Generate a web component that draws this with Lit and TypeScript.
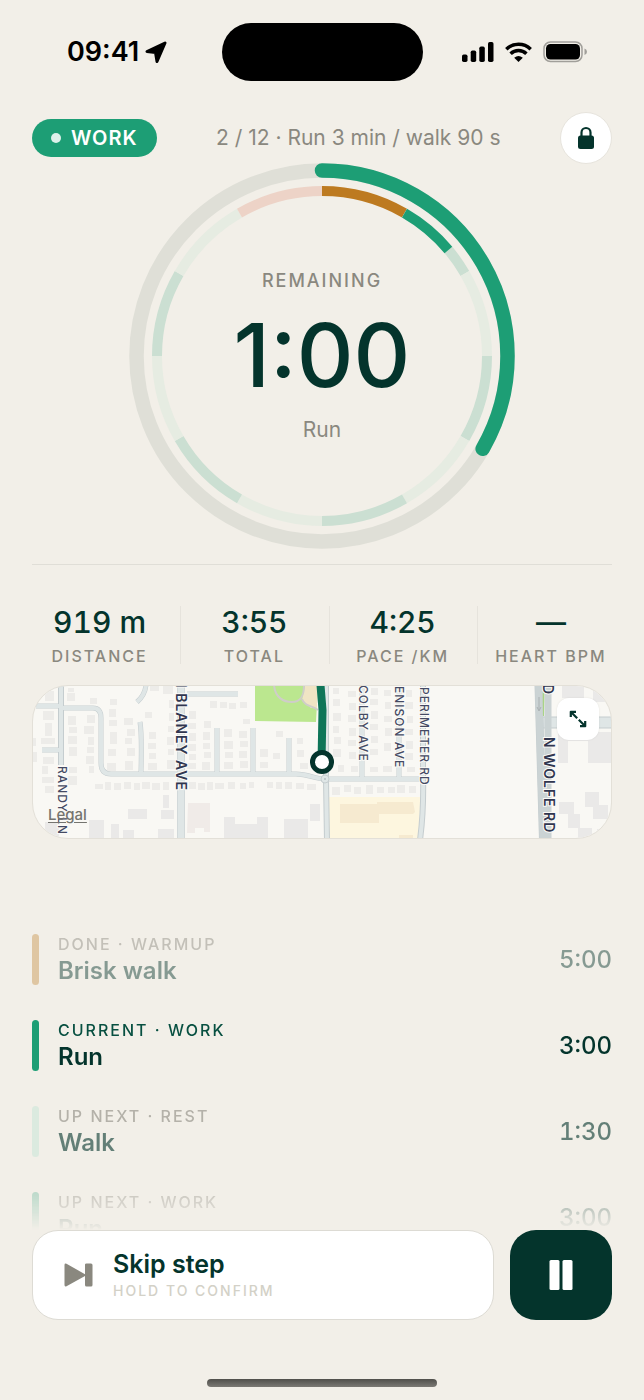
import { LitElement, html, svg, css } from 'lit';

type Kind = 'warmup' | 'work' | 'rest' | 'cooldown';

interface Stat {
  value: string;
  label: string;
}

interface Step {
  state: 'done' | 'current' | 'next';
  kind: Kind;
  name: string;
  time: string;
}

type Box = [number, number, number, number];

const SEGMENTS: Kind[] = [
  'warmup', 'work', 'rest', 'work', 'rest', 'work',
  'rest', 'work', 'rest', 'work', 'rest', 'cooldown'
];

const STATS: Stat[] = [
  { value: '919 m', label: 'Distance' },
  { value: '3:55', label: 'Total' },
  { value: '4:25', label: 'Pace /km' },
  { value: '—', label: 'Heart bpm' }
];

const STEPS: Step[] = [
  { state: 'done', kind: 'warmup', name: 'Brisk walk', time: '5:00' },
  { state: 'current', kind: 'work', name: 'Run', time: '3:00' },
  { state: 'next', kind: 'rest', name: 'Walk', time: '1:30' },
  { state: 'next', kind: 'work', name: 'Run', time: '3:00' }
];

const STATE_LABELS = { done: 'Done', current: 'Current', next: 'Up next' };

// Angles are in degrees, clockwise from twelve o'clock
function arc(r: number, from: number, to: number) {
  const point = (deg: number) => {
    const a = ((deg - 90) * Math.PI) / 180;
    return `${(193 + r * Math.cos(a)).toFixed(2)} ${(193 + r * Math.sin(a)).toFixed(2)}`;
  };
  return `M${point(from)}A${r} ${r} 0 ${to - from > 180 ? 1 : 0} 1 ${point(to)}`;
}

export class ProgressRing extends LitElement {
  static properties = {
    progress: { type: Number },
    current: { type: Number }
  };

  declare progress: number;
  declare current: number;

  static styles = css`
    :host {
      display: grid;
      width: 60%;
      min-width: 280px;
      max-width: 386px;
    }

    .dial,
    .content {
      grid-area: 1 / 1;
    }

    .dial {
      display: block;
      width: 100%;
      fill: none;
    }

    .track {
      stroke: #dfdfd7;
      stroke-width: 14.5;
    }

    .bar {
      stroke: #1d9e75;
      stroke-width: 14.5;
      stroke-linecap: round;
    }

    .segment {
      stroke-width: 10;
    }

    .warmup { stroke: #bd7a20; }
    .work { stroke: #cbdfd2; }
    .rest { stroke: #e6ece2; }
    .cooldown { stroke: #edd3c7; }
    .elapsed { stroke: #1d9e75; }

    .content {
      display: flex;
      flex-direction: column;
      align-items: center;
      justify-content: center;
    }
  `;

  render() {
    const size = 360 / SEGMENTS.length;
    const start = (this.current - 1) * size;
    return html`
      <svg class="dial" viewBox="0 0 386 386" aria-hidden="true">
        <circle class="track" cx="193" cy="193" r="185.5"></circle>
        <path class="bar" d=${arc(185.5, 0, this.progress * 360)}></path>
        ${SEGMENTS.map((kind, i) => svg`
          <path class="segment ${kind}" d=${arc(165, i * size, (i + 1) * size)}></path>
        `)}
        <path class="segment elapsed" d=${arc(165, start, start + size * 2 / 3)}></path>
      </svg>
      <div class="content"><slot></slot></div>
    `;
  }
}

customElements.define('progress-ring', ProgressRing);

const HOUSES: Box[] = [
  [45, 691, 9, 10], [67, 693, 8, 8], [43, 711, 11, 9], [45, 723, 7, 13], [41, 738, 14, 6],
  [68, 716, 8, 9], [69, 727, 8, 6], [68, 736, 9, 8], [69, 747, 8, 9], [43, 757, 11, 7],
  [42, 766, 6, 8], [42, 777, 12, 6], [69, 767, 8, 6], [68, 776, 9, 9], [45, 786, 9, 7],
  [87, 715, 8, 8], [84, 726, 10, 8], [88, 737, 6, 8], [87, 747, 7, 6], [86, 756, 8, 8],
  [89, 766, 5, 7], [68, 688, 6, 4], [90, 698, 7, 6],
  [110, 699, 7, 6], [109, 709, 7, 8], [109, 720, 8, 6], [110, 732, 7, 12], [108, 749, 8, 7],
  [107, 763, 9, 8], [124, 718, 9, 7], [127, 729, 8, 7], [125, 738, 7, 6], [127, 748, 8, 8],
  [125, 761, 8, 9], [145, 712, 7, 6], [149, 732, 7, 7], [148, 743, 8, 6], [149, 753, 7, 6],
  [148, 763, 9, 7], [150, 686, 9, 5], [163, 686, 10, 8], [169, 700, 5, 8], [169, 713, 5, 8],
  [168, 726, 6, 6], [167, 737, 7, 8], [168, 749, 6, 6], [167, 760, 8, 9],
  [189, 711, 7, 8], [188, 723, 8, 6], [189, 733, 7, 8], [188, 744, 8, 7], [189, 754, 7, 6],
  [187, 763, 9, 6], [204, 721, 7, 7], [203, 732, 7, 8], [203, 743, 7, 6], [204, 752, 7, 6],
  [202, 762, 8, 8], [210, 701, 7, 7], [220, 702, 7, 6], [229, 703, 7, 6], [240, 702, 7, 6],
  [224, 729, 8, 8], [224, 741, 9, 8], [225, 752, 8, 6], [224, 762, 9, 7],
  [239, 731, 8, 7], [240, 741, 8, 6], [239, 751, 8, 7], [240, 761, 8, 7], [243, 719, 7, 5],
  [276, 731, 7, 6], [260, 749, 8, 8], [260, 762, 8, 6], [273, 753, 7, 6], [297, 738, 6, 6],
  [297, 750, 7, 7], [300, 763, 8, 6],
  [333, 688, 6, 6], [333, 699, 7, 7], [333, 713, 8, 8], [333, 726, 6, 7], [334, 737, 7, 7],
  [333, 749, 8, 8], [338, 765, 6, 7], [348, 691, 8, 6], [349, 703, 7, 7], [348, 715, 8, 7],
  [349, 728, 7, 8], [348, 740, 8, 6], [349, 752, 7, 7], [351, 766, 7, 6],
  [371, 688, 7, 7], [370, 699, 8, 6], [371, 711, 7, 8], [370, 724, 8, 6], [371, 736, 7, 7],
  [370, 749, 8, 6], [370, 767, 8, 5], [384, 690, 7, 6], [385, 702, 6, 7], [384, 716, 8, 6],
  [385, 728, 7, 8], [384, 743, 7, 8], [383, 766, 9, 6], [406, 690, 6, 7], [405, 702, 8, 7],
  [407, 716, 6, 7], [405, 729, 8, 6], [406, 741, 7, 8], [405, 753, 8, 7], [407, 767, 8, 5],
  [95, 784, 8, 5], [105, 782, 6, 8], [114, 783, 7, 7], [124, 782, 7, 7], [134, 783, 6, 7],
  [142, 782, 8, 7], [152, 783, 8, 7], [163, 782, 6, 8], [189, 782, 7, 7], [198, 783, 7, 7],
  [207, 782, 6, 8], [215, 783, 9, 6], [228, 782, 7, 7], [240, 783, 6, 6], [249, 782, 5, 6],
  [267, 782, 6, 6], [276, 782, 6, 7], [285, 782, 7, 7], [296, 783, 8, 6], [307, 784, 9, 6],
  [332, 787, 8, 8], [344, 785, 7, 7], [354, 787, 7, 7], [366, 785, 7, 9], [377, 787, 7, 6],
  [388, 787, 7, 6], [397, 785, 8, 8], [409, 786, 7, 7],
  [33, 738, 3, 8], [33, 752, 4, 10]
];

const BLOCKS: Box[] = [
  [163, 795, 6, 13], [128, 809, 19, 10], [161, 810, 13, 9], [45, 822, 14, 17],
  [89, 820, 15, 19], [111, 824, 8, 15], [123, 830, 11, 9], [158, 829, 16, 10],
  [310, 804, 10, 17], [284, 819, 24, 20], [224, 817, 11, 22], [257, 817, 11, 22],
  [235, 824, 22, 15], [562, 685, 22, 13], [593, 687, 17, 15],
  [558, 733, 10, 30], [568, 732, 20, 9], [588, 732, 24, 11], [588, 743, 24, 20],
  [585, 792, 14, 15], [559, 802, 15, 12], [568, 814, 12, 14], [578, 828, 14, 11],
  [593, 805, 15, 14], [597, 829, 10, 8]
];

export class RouteMap extends LitElement {
  static styles = css`
    :host {
      display: block;
      position: relative;
      overflow: hidden;
      box-sizing: border-box;
      height: 154px;
      border: 1px solid #e3e0d8;
      border-radius: 36px;
      background: #f9f8f4;
    }

    .map {
      display: block;
      width: 100%;
      height: 100%;
    }

    .house { fill: #edece9; }
    .block { fill: #eae9e8; }
    .casing {
      fill: none;
      stroke: #c5cdcf;
    }
    .road {
      fill: none;
      stroke: #dfe6e6;
    }
    .main { stroke: #cbd3d4; }
    .w4 { stroke-width: 4; }
    .w5 { stroke-width: 5; }
    .w6 { stroke-width: 6; }
    .w7 { stroke-width: 7; }
    .w8 { stroke-width: 8; }
    .w10 { stroke-width: 10; }
    .w12 { stroke-width: 12; }

    .street {
      font: 500 12px/1 Inter, "Liberation Sans", sans-serif;
      letter-spacing: 1px;
      fill: #444a63;
      stroke: #fbfaf7;
      stroke-width: 2;
      paint-order: stroke;
    }

    .avenue {
      font-weight: 600;
      font-size: 14px;
      fill: #30364f;
    }

    .route {
      fill: none;
      stroke: #0e7558;
      stroke-width: 8;
    }

    .legal {
      position: absolute;
      left: 15px;
      bottom: 14px;
      color: #74746f;
      font-size: 15px;
      font-weight: 500;
      line-height: 18px;
      text-underline-offset: 2px;
    }

    .expand {
      position: absolute;
      top: 12px;
      right: 12px;
      display: grid;
      place-items: center;
      width: 42px;
      height: 42px;
      padding: 0;
      border: 0;
      border-radius: 12px;
      background: #fff;
      box-shadow: 0 0 2px #00000018;
    }
  `;

  private boxes(list: Box[], name: string) {
    return svg`<path class=${name} d=${list.map(([x, y, w, h]) => `M${x} ${y}h${w}v${h}h-${w}z`).join('')}></path>`;
  }

  // Each road is a wide casing with a narrower fill on top
  private roads() {
    const minor = 'M36 706H61M61 708H93Q101 708 101 718V763Q101 774 111 774H296C309 774 314 779 325 779H423'
      + 'M42 750H60M137 702Q145 695 146 685M140 722Q142 734 141 772M187 694H238'
      + 'M217 728V772M253 728V772M289 738V772M362 685V778M399 685V778';
    const medium = 'M61 685V765M326 685V779L327 840M423 685V772Q424 810 420 840';
    const big = 'M181 685V840';
    return svg`
      <path class="casing w5" d=${minor}></path>
      <path class="casing w6" d=${medium}></path>
      <path class="casing w8" d=${big}></path>
      <path class="casing w12" d="M540 722.5H612"></path>
      <path class="road w4" d=${minor}></path>
      <path class="road w4" d=${medium}></path>
      <path class="road w7" d=${big}></path>
      <path class="road w10" d="M540 722.5H612"></path>
      <path class="casing w8" d="M538.5 685L543 840"></path>
      <path class="road main w7" d="M538.5 685L543 840M548 685V840"></path>
      <path d="M542.5 685h2l-.5 31h-1z" fill="#a9d486"></path>
      <path d="M539 697v13m-2-3 2 4 2-4" stroke="#aab1b2" fill="none"></path>
      <circle cx="325" cy="779" r="4" fill="#dfe6e6" stroke="#c5cdcf"></circle>
      <circle cx="325" cy="779" r="1" fill="#b6bfc2"></circle>
    `;
  }

  render() {
    return html`
      <svg class="map" viewBox="33 686 578 152" preserveAspectRatio="xMidYMid slice" role="img" aria-label="Route map">
        ${this.boxes(HOUSES, 'house')}
        ${this.boxes(BLOCKS, 'block')}
        <path d="M188 803h22v29h-6v-4h-9v5h-8z" fill="#f0ebe8"></path>
        <path d="M255 685h63l-2 37-61-1z" fill="#bbe78f"></path>
        <path d="M305 685h12v23h-6l-9-8z" fill="#f0e4c4"></path>
        <path d="M274 685c1 13 10 17 18 17 9 0 12-6 12-17M302 699c3 8 10 6 16 11" fill="none" stroke="#cfcdc9" stroke-width="2"></path>
        <path d="M329 797h92l-3 42h-89z" fill="#fdf6df"></path>
        <path d="M340 804h37v-2h36l2 10-2 2h-34v9h-39zM399 835h14v4h-14z" fill="#f6ead0"></path>
        ${this.roads()}
        <text class="street" transform="translate(58 766) rotate(90)">RANDY LN</text>
        <text class="street avenue" transform="translate(176 677) rotate(90)">N BLANEY AVE</text>
        <text class="street" transform="translate(359 685) rotate(90)">COLBY AVE</text>
        <text class="street" transform="translate(395 686) rotate(90)">ENISON AVE</text>
        <text class="street" transform="translate(420 687) rotate(90)">PERIMETER RD</text>
        <text class="street avenue" transform="translate(544 737) rotate(90)">N WOLFE RD</text>
        <text class="street avenue" transform="translate(543 684) rotate(90)">D</text>
        <path class="route" d="M320.5 685L322.5 710L321.5 762"></path>
        <circle cx="322" cy="762" r="9.5" fill="#fff" stroke="#04342c" stroke-width="5"></circle>
      </svg>
      <a class="legal" href="#legal">Legal</a>
      <button class="expand" aria-label="Expand map">
        <svg width="18" height="18" viewBox="0 0 18 18" fill="none" stroke="#04342c" stroke-width="2.2" stroke-linejoin="round">
          <path d="M1.8 7V1.8H7M2 2L8.200 8.200M16.200 11V16.200H11M16 16L9.800 9.800"></path>
        </svg>
      </button>
    `;
  }
}

customElements.define('route-map', RouteMap);

export class AppRoot extends LitElement {
  static styles = css`
    :host {
      display: flex;
      flex-direction: column;
      box-sizing: border-box;
      min-height: 100vh;
      padding: 23px 0 13px;
      background: #f2efe8;
      color: #04342c;
      font-family: Inter, "Liberation Sans", sans-serif;
    }

    button {
      font: inherit;
      color: inherit;
      cursor: pointer;
    }

    .status {
      display: grid;
      grid-template-columns: 1fr auto 1fr;
      align-items: center;
      color: #000;
    }

    .clock {
      display: flex;
      align-items: center;
      gap: 6px;
      padding-left: 67px;
      font-size: 27px;
      line-height: 34px;
      font-weight: 600;
    }

    .island {
      width: 201px;
      height: 58px;
      border-radius: 29px;
      background: #000;
    }

    .signals {
      display: flex;
      align-items: center;
      justify-content: flex-end;
      gap: 11px;
      padding-right: 56px;
    }

    .header,
    .stats,
    .steps,
    .controls,
    .map-wrap {
      margin-left: 32px;
      margin-right: 32px;
    }

    .header {
      display: flex;
      align-items: center;
      justify-content: space-between;
      height: 50px;
      margin-top: 32px;
    }

    .badge {
      display: flex;
      align-items: center;
      gap: 10px;
      box-sizing: border-box;
      height: 38px;
      padding: 0 19px;
      border-radius: 19px;
      background: #1d9e75;
      color: #fff;
      font-size: 20px;
      font-weight: 600;
      letter-spacing: 1px;
    }

    .dot {
      width: 10px;
      height: 10px;
      border-radius: 50%;
      background: #ddf1ea;
    }

    .title {
      color: #8a887f;
      font-size: 21px;
      line-height: 26px;
    }

    .lock {
      display: grid;
      flex: none;
      place-items: center;
      width: 52px;
      height: 52px;
      padding: 0;
      border: 1px solid #e7e4dd;
      border-radius: 50%;
      background: #fff;
    }

    .ring {
      align-self: center;
    }

    .remaining {
      color: #8a887f;
      font-size: 18px;
      line-height: 24px;
      font-weight: 500;
      letter-spacing: 2px;
      text-transform: uppercase;
    }

    .countdown {
      margin: 18px 0;
      font-size: 88px;
      line-height: 88px;
      font-weight: 500;
    }

    .activity {
      color: #8a887f;
      font-size: 21px;
      line-height: 26px;
    }

    .stats {
      display: grid;
      grid-template-columns: repeat(4, 1fr);
      column-gap: 13px;
      margin-top: 15px;
      padding: 41px 0 21px;
      border-top: 1px solid #e0ded7;
    }

    .stat {
      text-align: center;
      white-space: nowrap;
    }

    .stat + .stat {
      padding-left: 12px;
      border-left: 1px solid #e6e3dc;
    }

    .value {
      font-size: 30px;
      line-height: 32px;
      font-weight: 500;
      font-variant-numeric: tabular-nums;
    }

    .label {
      margin-top: 10px;
      color: #8a887f;
      font-size: 16px;
      line-height: 16px;
      font-weight: 500;
      letter-spacing: 2px;
      text-transform: uppercase;
    }

    .steps {
      flex: 1 1 0;
      display: flex;
      flex-direction: column;
      gap: 35px;
      min-height: 200px;
      margin-top: 40px;
      margin-bottom: 0;
      padding: 55px 0 0;
      overflow: hidden;
      list-style: none;
      mask-image: linear-gradient(to top, transparent, #000 60px);
    }

    .step {
      display: flex;
      flex: none;
      align-items: center;
      height: 51px;
    }

    .marker {
      width: 7px;
      height: 51px;
      margin-right: 19px;
      border-radius: 4px;
      background: #1d9e75;
    }

    .marker.warmup { background: #bd7a20; }
    .marker.rest { background: #b9e3d3; }

    .caption {
      color: #8a887f;
      font-size: 16px;
      line-height: 22px;
      font-weight: 500;
      letter-spacing: 2px;
      text-transform: uppercase;
    }

    .name,
    .time {
      font-size: 24px;
      line-height: 32px;
      font-weight: 500;
    }

    .name {
      font-weight: 600;
    }

    .time {
      margin-left: auto;
      font-variant-numeric: tabular-nums;
    }

    .done .marker { opacity: 0.35; }
    .done .caption,
    .done .name,
    .done .time { opacity: 0.45; }
    .current .caption { color: #085041; }
    .next .marker { opacity: 0.4; }
    .next .caption,
    .next .name,
    .next .time { opacity: 0.6; }

    .controls {
      display: flex;
      gap: 16px;
    }

    .skip {
      display: flex;
      flex: 1;
      align-items: center;
      gap: 20px;
      height: 90px;
      padding: 0 31px;
      border: 1px solid #dddbd4;
      border-radius: 26px;
      background: #fff;
      text-align: left;
    }

    .skip-title,
    .skip-hint {
      display: block;
    }

    .skip-title {
      font-size: 25px;
      line-height: 32px;
      font-weight: 600;
    }

    .skip-hint {
      color: #d3d1c7;
      font-size: 14px;
      line-height: 22px;
      font-weight: 500;
      letter-spacing: 2px;
      text-transform: uppercase;
    }

    .pause {
      display: grid;
      place-items: center;
      width: 102px;
      height: 90px;
      padding: 0;
      border: 0;
      border-radius: 26px;
      background: #04342c;
    }

    .home {
      align-self: center;
      width: 230px;
      height: 8px;
      margin-top: 59px;
      border-radius: 4px;
      background: linear-gradient(#504f4b, #7b7974);
    }
  `;

  private statusBar() {
    return html`
      <div class="status">
        <div class="clock">
          <span>09:41</span>
          <svg width="22" height="22" viewBox="0 0 22 22" aria-hidden="true">
            <path d="M20 2L12 20.5L10.5 11.5L2 10.5Z" stroke="#000" stroke-width="3" stroke-linejoin="round"></path>
          </svg>
        </div>
        <div class="island"></div>
        <div class="signals">
          <svg width="32" height="20" viewBox="0 0 32 20" aria-hidden="true">
            <rect x="0" y="12.5" width="5.5" height="7.5" rx="1.7"></rect>
            <rect x="8.7" y="8.5" width="5.5" height="11.5" rx="1.7"></rect>
            <rect x="17.3" y="4.5" width="5.5" height="15.5" rx="1.7"></rect>
            <rect x="26" y="0" width="5.5" height="20" rx="1.7"></rect>
          </svg>
          <svg width="27" height="20" viewBox="0 0 27 20" fill="none" stroke="#000" aria-hidden="true">
            <path d="M1.3 7.2A17.5 17.5 0 0 1 25.7 7.2" stroke-width="3.5"></path>
            <path d="M5.6 11.7A11.3 11.3 0 0 1 21.4 11.7" stroke-width="3.5"></path>
            <path d="M9.2 15.7Q13.5 12.2 17.8 15.7L13.5 20Z" fill="#000" stroke="none"></path>
          </svg>
          <svg width="45" height="22" viewBox="0 0 45 22" aria-hidden="true">
            <rect x="1" y="1" width="38" height="19.5" rx="6.5" fill="none" stroke="#a19f9a" stroke-width="1.5"></rect>
            <rect x="3" y="3" width="34" height="15.5" rx="4.5"></rect>
            <path d="M41.5 7.5q2.5 1 2.5 3.2t-2.5 3.3z" fill="#a19f9a"></path>
          </svg>
        </div>
      </div>
    `;
  }

  render() {
    return html`
      ${this.statusBar()}
      <div class="header">
        <div class="badge"><span class="dot"></span>WORK</div>
        <div class="title">2 / 12 · Run 3 min / walk 90 s</div>
        <button class="lock" aria-label="Lock screen">
          <svg width="18" height="24" viewBox="0 0 18 24" aria-hidden="true">
            <rect x="1" y="9.5" width="16" height="13.5" rx="2.5" fill="#04342c"></rect>
            <path d="M4.5 11V6.5a4.5 4.5 0 0 1 9 0V11" fill="none" stroke="#04342c" stroke-width="2.2"></path>
          </svg>
        </button>
      </div>

      <progress-ring class="ring" progress=${1 / 3} current="2">
        <div class="remaining">Remaining</div>
        <div class="countdown">1:00</div>
        <div class="activity">Run</div>
      </progress-ring>

      <div class="stats">
        ${STATS.map((stat) => html`
          <div class="stat">
            <div class="value">${stat.value}</div>
            <div class="label">${stat.label}</div>
          </div>
        `)}
      </div>

      <div class="map-wrap"><route-map></route-map></div>

      <ul class="steps">
        ${STEPS.map((step) => html`
          <li class="step ${step.state}">
            <span class="marker ${step.kind}"></span>
            <div>
              <div class="caption">${STATE_LABELS[step.state]} · ${step.kind}</div>
              <div class="name">${step.name}</div>
            </div>
            <div class="time">${step.time}</div>
          </li>
        `)}
      </ul>

      <div class="controls">
        <button class="skip">
          <svg width="29" height="24" viewBox="0 0 29 24" fill="#8a887f" aria-hidden="true">
            <path d="M.5 2Q.5 0 2.5 .8L21 11.2V1.5Q21 .5 22.5 .5H27Q28.5 .5 28.5 2V22Q28.5 23.5 27 23.5H22.5Q21 23.5 21 22V13L2.5 23.2Q.5 24 .5 22Z"></path>
          </svg>
          <span>
            <span class="skip-title">Skip step</span>
            <span class="skip-hint">Hold to confirm</span>
          </span>
        </button>
        <button class="pause" aria-label="Pause">
          <svg width="24" height="32" viewBox="0 0 24 32" fill="#fff" aria-hidden="true">
            <rect x=".5" y="1" width="10" height="30" rx="1.5"></rect>
            <rect x="13.5" y="1" width="10" height="30" rx="1.5"></rect>
          </svg>
        </button>
      </div>
      <div class="home"></div>
    `;
  }
}

customElements.define('app-root', AppRoot);

declare global {
  interface HTMLElementTagNameMap {
    'progress-ring': ProgressRing;
    'route-map': RouteMap;
    'app-root': AppRoot;
  }
}
